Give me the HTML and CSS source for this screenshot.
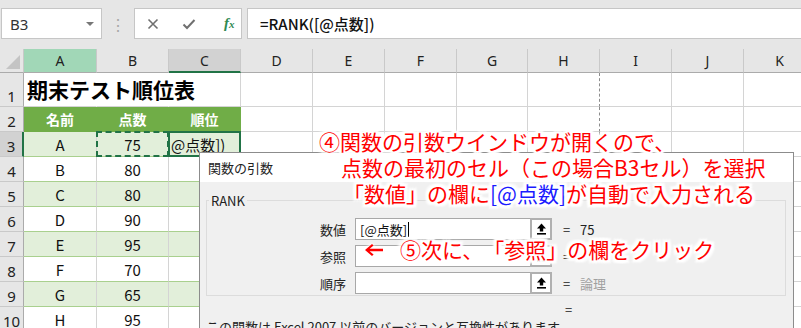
FILE: index.html
```html
<!DOCTYPE html>
<html lang="ja">
<head>
<meta charset="utf-8">
<link rel="stylesheet" href="styles.css">
</head>
<body>
<div class="fbar">
  <div class="namebox"><span>B3</span><span class="dd"></span></div>
  <div class="dots">⋮</div>
  <div class="fbtns">
    <svg class="ic" width="12" height="12" viewBox="0 0 12 12"><path d="M1.5 1.5 L10.5 10.5 M10.5 1.5 L1.5 10.5" stroke="#707070" stroke-width="1.6" fill="none"/></svg>
    <svg class="ic" width="14" height="12" viewBox="0 0 14 12"><path d="M1.5 6.5 L5 10 L12.5 2" stroke="#707070" stroke-width="2" fill="none"/></svg>
    <span class="fx">f<span class="fxx">x</span></span>
  </div>
  <div class="finput">=RANK([@点数])</div>
</div>

<div class="sheet">
  <div class="ch corner"><svg width="14" height="14" viewBox="0 0 14 14"><polygon points="14,0 14,14 0,14" fill="#c4c4c4"/></svg></div>
  <div class="ch selA">A</div><div class="ch">B</div><div class="ch selC">C</div><div class="ch">D</div><div class="ch">E</div><div class="ch">F</div><div class="ch">G</div><div class="ch">H</div><div class="ch">I</div><div class="ch">J</div><div class="ch">K</div>

  <div class="rh r1">1</div><div class="c r1 nob"><span class="title">期末テスト順位表</span></div><div class="c r1 nob"></div><div class="c r1"></div><div class="c r1"></div><div class="c r1"></div><div class="c r1"></div><div class="c r1"></div><div class="c r1 pb"></div><div class="c r1"></div><div class="c r1"></div><div class="c r1"></div>

  <div class="rh">2</div><div class="c th">名前</div><div class="c th">点数</div><div class="c th">順位</div><div class="c"></div><div class="c"></div><div class="c"></div><div class="c"></div><div class="c pb"></div><div class="c"></div><div class="c"></div><div class="c"></div>

  <div class="rh rsel">3</div><div class="c t band">A</div><div class="c t band ants">75</div><div class="c t band act"><span class="edit">@点数])</span></div><div class="c"></div><div class="c"></div><div class="c"></div><div class="c"></div><div class="c pb"></div><div class="c"></div><div class="c"></div><div class="c"></div>

  <div class="rh">4</div><div class="c t">B</div><div class="c t">80</div><div class="c t"></div><div class="c"></div><div class="c"></div><div class="c"></div><div class="c"></div><div class="c"></div><div class="c"></div><div class="c"></div><div class="c"></div>

  <div class="rh">5</div><div class="c t band">C</div><div class="c t band">80</div><div class="c t band"></div><div class="c"></div><div class="c"></div><div class="c"></div><div class="c"></div><div class="c"></div><div class="c"></div><div class="c"></div><div class="c"></div>

  <div class="rh">6</div><div class="c t">D</div><div class="c t">90</div><div class="c t"></div><div class="c"></div><div class="c"></div><div class="c"></div><div class="c"></div><div class="c"></div><div class="c"></div><div class="c"></div><div class="c"></div>

  <div class="rh">7</div><div class="c t band">E</div><div class="c t band">95</div><div class="c t band"></div><div class="c"></div><div class="c"></div><div class="c"></div><div class="c"></div><div class="c"></div><div class="c"></div><div class="c"></div><div class="c"></div>

  <div class="rh">8</div><div class="c t">F</div><div class="c t">70</div><div class="c t"></div><div class="c"></div><div class="c"></div><div class="c"></div><div class="c"></div><div class="c"></div><div class="c"></div><div class="c"></div><div class="c"></div>

  <div class="rh">9</div><div class="c t band">G</div><div class="c t band">65</div><div class="c t band"></div><div class="c"></div><div class="c"></div><div class="c"></div><div class="c"></div><div class="c"></div><div class="c"></div><div class="c"></div><div class="c"></div>

  <div class="rh">10</div><div class="c t">H</div><div class="c t">95</div><div class="c t"></div><div class="c"></div><div class="c"></div><div class="c"></div><div class="c"></div><div class="c"></div><div class="c"></div><div class="c"></div><div class="c"></div>
</div>

<div class="dialog">
  <div class="dtitle">関数の引数</div>
  <div class="dbody">
    <fieldset class="group">
      <legend>RANK</legend>
      <div class="arow">
        <span class="alabel">数値</span>
        <div class="field"><span class="ftext">[@点数]</span><span class="caret"></span>
          <span class="fbtn"><svg width="11" height="12" viewBox="0 0 11 12"><path d="M5.5 0.5 L1 5.5 H3.8 V8.5 H7.2 V5.5 H10 Z" fill="#000"/><rect x="1" y="10" width="9" height="1.6" fill="#000"/></svg></span>
        </div>
        <span class="eq">=</span><span class="aval">75</span>
      </div>
      <div class="arow">
        <span class="alabel">参照</span>
        <div class="field">
          <span class="fbtn"><svg width="11" height="12" viewBox="0 0 11 12"><path d="M5.5 0.5 L1 5.5 H3.8 V8.5 H7.2 V5.5 H10 Z" fill="#000"/><rect x="1" y="10" width="9" height="1.6" fill="#000"/></svg></span>
        </div>
        <span class="eq">=</span><span class="aval"></span>
      </div>
      <div class="arow">
        <span class="alabel">順序</span>
        <div class="field">
          <span class="fbtn"><svg width="11" height="12" viewBox="0 0 11 12"><path d="M5.5 0.5 L1 5.5 H3.8 V8.5 H7.2 V5.5 H10 Z" fill="#000"/><rect x="1" y="10" width="9" height="1.6" fill="#000"/></svg></span>
        </div>
        <span class="eq">=</span><span class="aval gray">論理</span>
      </div>
    </fieldset>
    <div class="req">=</div>
    <div class="desc">この関数は Excel 2007 以前のバージョンと互換性があります。</div>
  </div>
</div>

<div class="note n1">
  <div class="l1">④関数の引数ウインドウが開くので、</div>
  <div class="l2">点数の最初のセル（この場合B3セル）を選択</div>
  <div class="l3">「数値」の欄に<span class="blue">[@点数]</span>が自動で入力される</div>
</div>
<div class="note n2"><svg class="arrow" width="20" height="14" viewBox="0 0 20 14"><path d="M1 7 L8 1 L9.6 2.6 L5.6 5.8 H19 V8.2 H5.6 L9.6 11.4 L8 13 Z" fill="#ff0000" stroke="#fff" stroke-width="0"/></svg><span class="n2t">⑤次に、「参照」の欄をクリック</span></div>
</body>
</html>
```

FILE: styles.css
```css
* { box-sizing: border-box; }
body {
  margin: 0;
  width: 801px;
  height: 328px;
  overflow: hidden;
  position: relative;
  background: #fff;
  font-family: "Noto Sans CJK JP", "Noto Sans", sans-serif;
  color: #222;
}

/* formula bar */
.fbar {
  height: 49px;
  background: #e6e6e6;
  display: flex;
  align-items: flex-start;
  padding-top: 8px;
}
.namebox {
  margin-left: 1px;
  width: 101px;
  height: 31px;
  background: #fff;
  border: 1px solid #c6c6c6;
  display: flex;
  align-items: center;
  justify-content: space-between;
  padding: 0 7px 0 8px;
  font-family: "Noto Sans", sans-serif;
  font-size: 15px;
  color: #333;
}
.dd {
  width: 0; height: 0;
  border-left: 4px solid transparent;
  border-right: 4px solid transparent;
  border-top: 4px solid #777;
}
.dots {
  width: 32px;
  height: 31px;
  display: flex;
  align-items: center;
  justify-content: center;
  color: #a8a8a8;
  font-size: 16px;
}
.fbtns {
  width: 108px;
  height: 31px;
  background: #fff;
  border: 1px solid #c6c6c6;
  display: flex;
  align-items: center;
  padding-left: 12px;
  gap: 23px;
}
.fx {
  font-family: "Liberation Serif", serif;
  font-style: italic;
  font-weight: bold;
  color: #2f8a52;
  font-size: 15px;
  margin-left: 5px;
}
.fxx { font-size: 11px; }
.finput {
  margin-left: 5px;
  flex: 1;
  height: 31px;
  background: #fff;
  border: 1px solid #c6c6c6;
  border-right: none;
  display: flex;
  align-items: center;
  padding-left: 12px;
  font-size: 15px;
  font-weight: 500;
  color: #111;
}

/* sheet grid */
.sheet {
  display: grid;
  grid-template-columns: 24px 73px 72px 72px 72px 72px 72px 71px 72px 72px 72px 72px;
  grid-template-rows: 24px 34px repeat(9, 25px);
}
.ch {
  background: #e6e6e6;
  border-right: 1px solid #c9c9c9;
  border-bottom: 1px solid #ababab;
  display: flex;
  align-items: center;
  justify-content: center;
  font-family: "Noto Sans", sans-serif;
  font-size: 14px;
  color: #222;
}
.corner { justify-content: flex-end; align-items: flex-end; padding: 0 3px 3px 0; }
.selA { background: #a1d7b7; }
.selC { background: #d2d2d2; border-bottom: 2px solid #217346; }
.rh {
  background: #e6e6e6;
  border-right: 1px solid #ababab;
  border-bottom: 1px solid #c9c9c9;
  display: flex;
  align-items: flex-end;
  justify-content: center;
  padding-bottom: 0;
  font-family: "Noto Sans", sans-serif;
  font-size: 15px;
  color: #222;
}
.rsel { background: #d2d2d2; border-right: 2px solid #217346; }
.c {
  position: relative;
  border-right: 1px solid #d4d4d4;
  border-bottom: 1px solid #d4d4d4;
  display: flex;
  align-items: center;
  justify-content: center;
  font-size: 15px;
  color: #111;
}
.nob { border-right-color: transparent; }
.pb { border-right: 1px dashed #8c8c8c; }
.title {
  position: absolute;
  left: 3px;
  bottom: 2px;
  white-space: nowrap;
  font-size: 21px;
  font-weight: bold;
  color: #000;
  z-index: 1;
}
.th {
  background: #70ad47;
  border-right-color: #70ad47;
  border-bottom-color: #70ad47;
  color: #fff;
  font-weight: bold;
  font-size: 14px;
}
.t { border-bottom-color: #a9d08e; }
.band { background: #e2efda; }
.ants::after {
  content: "";
  position: absolute;
  inset: -1px -1px -1px -1px;
  border: 2px dashed #217346;
}
.act { justify-content: flex-start; overflow: visible; }
.act::after {
  content: "";
  position: absolute;
  inset: -1px -1px -1px -1px;
  border: 2px solid #217346;
}
.edit { padding-left: 2px; font-size: 15px; color: #111; }

/* dialog */
.dialog {
  position: absolute;
  left: 199px;
  top: 152px;
  width: 595px;
  height: 200px;
  background: #f0f0f0;
  border: 1px solid #8c8c8c;
  z-index: 2;
}
.dtitle {
  height: 29px;
  background: #fff;
  display: flex;
  align-items: center;
  padding-left: 8px;
  font-size: 13px;
  color: #222;
}
.dbody { padding: 9px 7px 0 6px; }
.group {
  margin: 0;
  width: 580px;
  height: 105px;
  border: 1px solid #dcdcdc;
  padding: 8px 0 0 0;
  display: flex;
  flex-direction: column;
  gap: 5px;
}
.group legend {
  margin-left: 2px;
  padding: 0 2px;
  font-size: 13px;
  color: #222;
}
.arow {
  display: flex;
  align-items: center;
  height: 22px;
}
.alabel {
  width: 139px;
  text-align: right;
  font-size: 13px;
  color: #222;
}
.field {
  margin-left: 9px;
  width: 197px;
  height: 22px;
  background: #fff;
  border: 1px solid #a8a8a8;
  display: flex;
  align-items: center;
  padding-left: 4px;
  position: relative;
}
.ftext { font-size: 13px; color: #111; }
.caret { width: 1px; height: 15px; background: #000; margin-left: 1px; }
.fbtn {
  position: absolute;
  right: -1px;
  top: -1px;
  width: 22px;
  height: 22px;
  border: 2px solid #b0b0b0;
  background: #fff;
  display: flex;
  align-items: center;
  justify-content: center;
}
.eq { margin-left: 11px; font-size: 13px; color: #222; width: 10px; }
.aval { margin-left: 7px; font-size: 13px; color: #222; }
.gray { color: #a0a0a0; }
.req {
  margin-top: 6px;
  margin-left: 359px;
  font-size: 13px;
  line-height: 16px;
  color: #222;
}
.desc {
  margin-top: 1px;
  font-size: 13px;
  line-height: 16px;
  color: #222;
  white-space: nowrap;
}

/* annotations */
.note {
  position: absolute;
  z-index: 3;
  color: #ff0000;
  font-size: 21px;
  line-height: 26px;
  white-space: nowrap;
  text-spacing-trim: space-all;
  font-feature-settings: "palt" 0;
  text-shadow:
    2px 0 1px #fff, -2px 0 1px #fff, 0 2px 1px #fff, 0 -2px 1px #fff,
    2px 2px 1px #fff, -2px -2px 1px #fff, 2px -2px 1px #fff, -2px 2px 1px #fff,
    3px 0 2px #fff, -3px 0 2px #fff, 0 3px 2px #fff, 0 -3px 2px #fff,
    3px 3px 2px #fff, -3px -3px 2px #fff, 3px -3px 2px #fff, -3px 3px 2px #fff;
}
.n1 { left: 319px; top: 128px; }
.l2 { margin-left: 22px; }
.l3 { margin-left: 24px; }
.blue { color: #1a1aff; }
.n2 { left: 364px; top: 236px; display: flex; align-items: center; }
.arrow {
  margin-top: 1px;
  margin-right: 16px;
  filter: drop-shadow(0 0 1.5px #fff) drop-shadow(0 0 1.5px #fff);
}
```
